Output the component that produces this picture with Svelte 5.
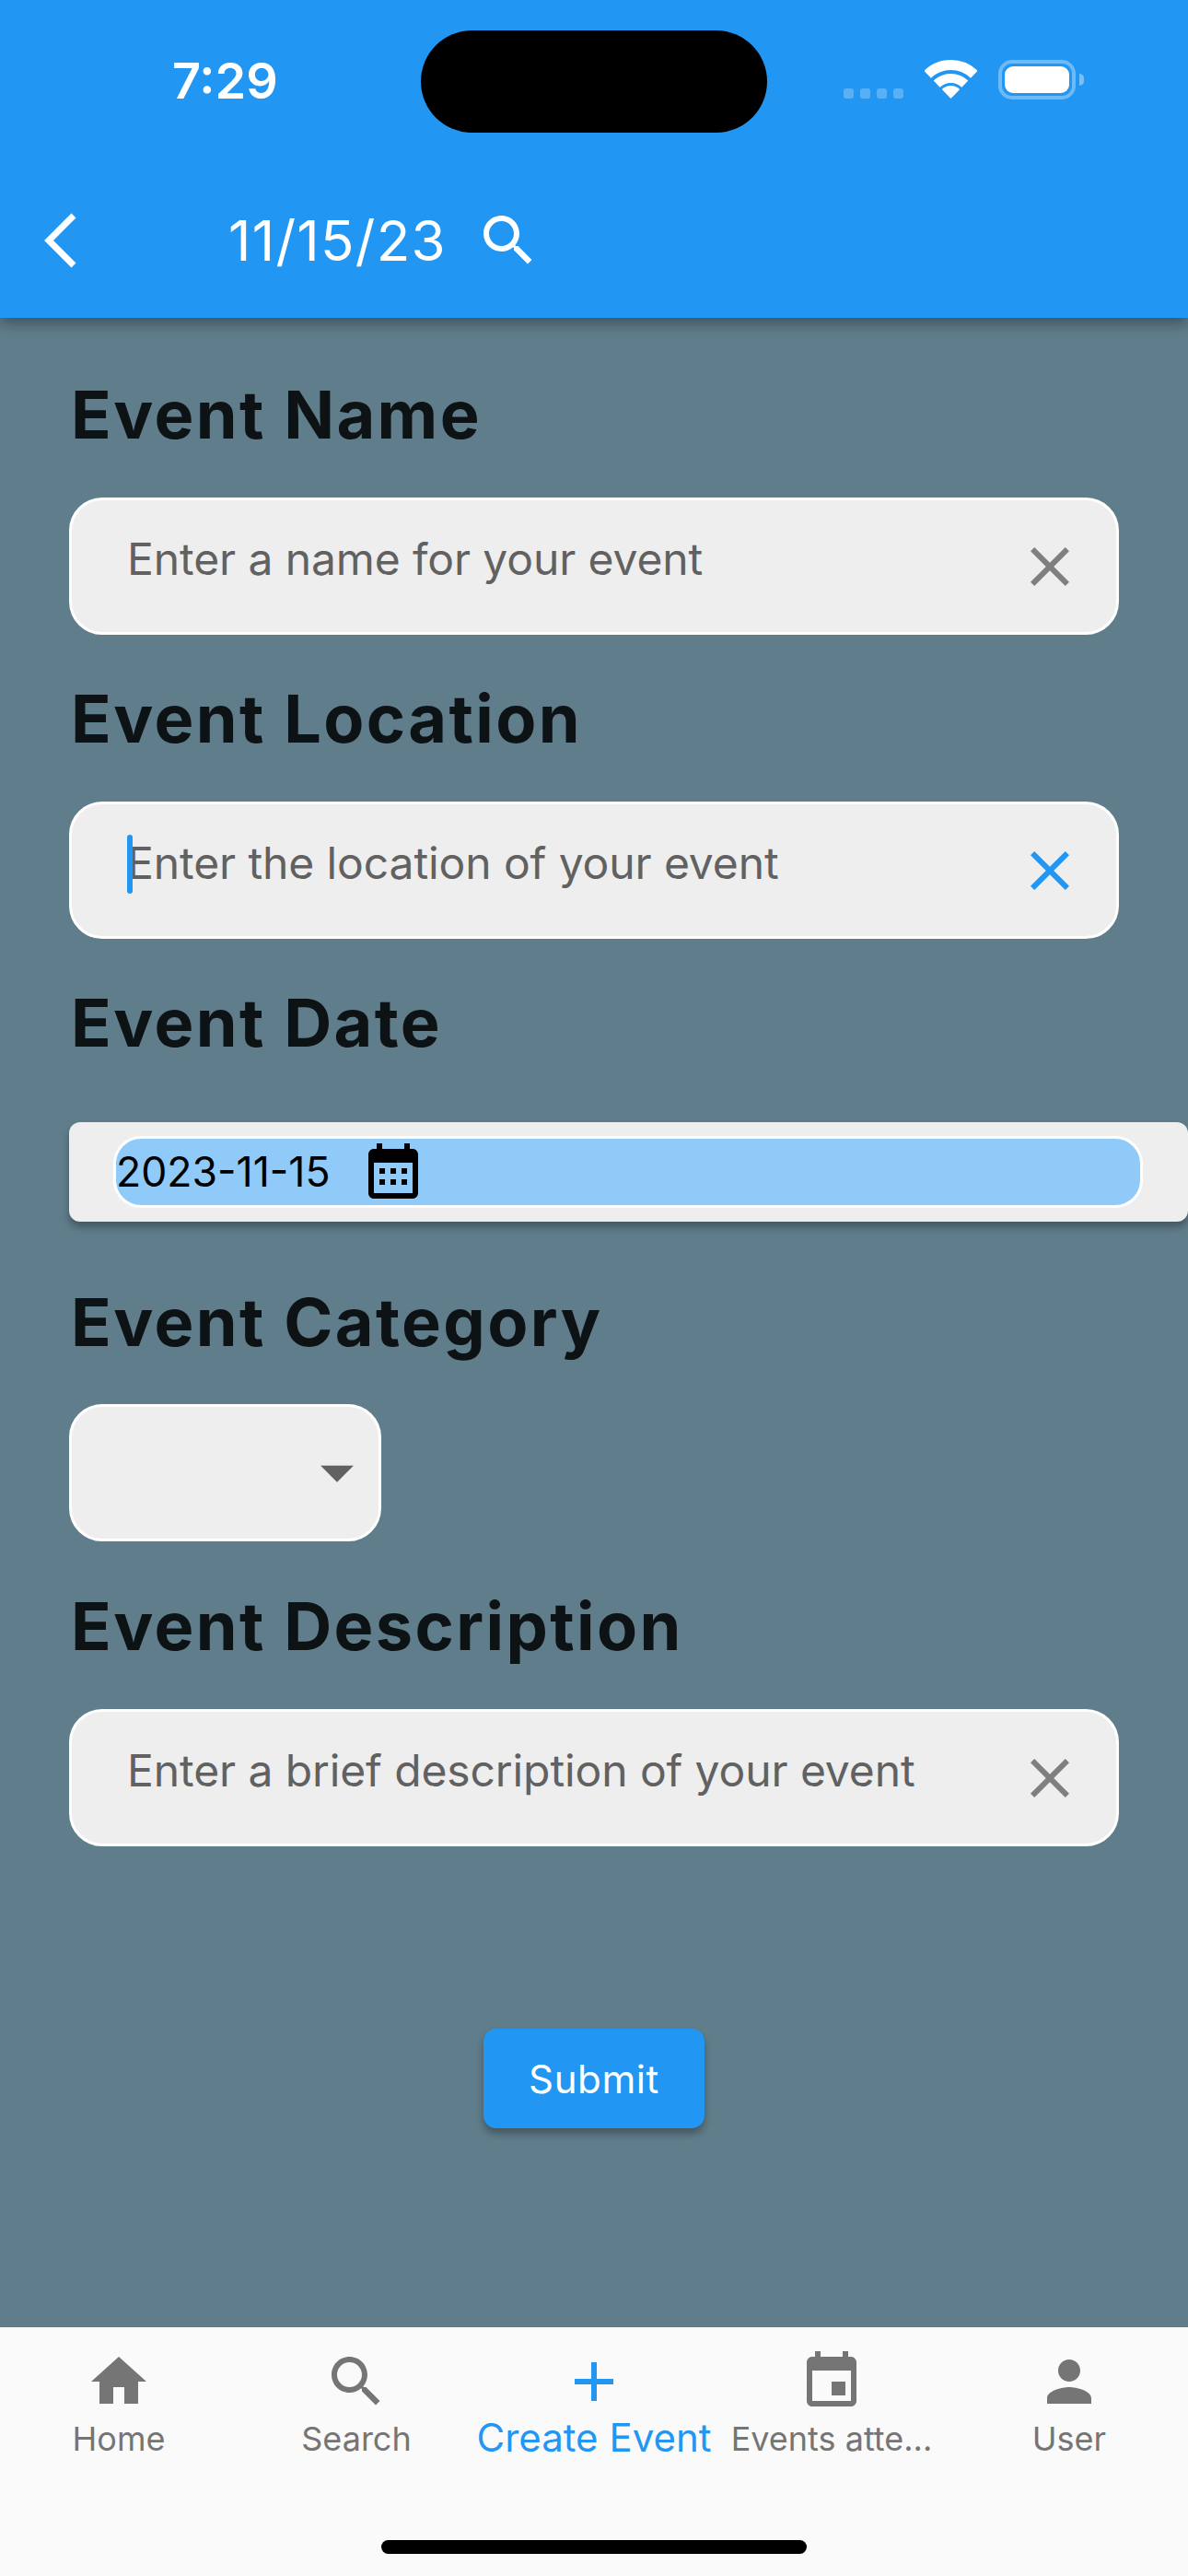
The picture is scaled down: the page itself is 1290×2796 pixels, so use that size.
<script>
  const signalDots = [0, 1, 2, 3];
  const fields = {
    name: 'Enter a name for your event',
    location: 'Enter the location of your event',
    description: 'Enter a brief description of your event',
  };
  const closePath = 'M19 6.41 17.59 5 12 10.59 6.41 5 5 6.41 10.59 12 5 17.59 6.41 19 12 13.41 17.59 19 19 17.59 13.41 12z';
  const tabs = [
    { label: 'Home', d: 'M10 20v-6h4v6h5v-8h3L12 3 2 12h3v8z' },
    { label: 'Search', d: 'M15.5 14h-.79l-.28-.27C15.41 12.59 16 11.11 16 9.5 16 5.91 13.09 3 9.5 3S3 5.91 3 9.5 5.91 16 9.5 16c1.61 0 3.09-.59 4.23-1.57l.27.28v.79l5 4.99L20.49 19l-4.99-5zm-6 0C7.01 14 5 11.99 5 9.5S7.01 5 9.5 5 14 7.01 14 9.5 11.99 14 9.5 14z' },
    { label: 'Create Event', d: 'M19 13h-6v6h-2v-6H5v-2h6V5h2v6h6v2z', active: true },
    { label: 'Events atte...', d: 'M17 12h-5v5h5v-5zM16 1v2H8V1H6v2H5c-1.11 0-1.99.9-1.99 2L3 19c0 1.1.89 2 2 2h14c1.1 0 2-.9 2-2V5c0-1.1-.9-2-2-2h-1V1h-2zm3 18H5V8h14v11z' },
    { label: 'User', d: 'M12 12c2.21 0 4-1.79 4-4s-1.79-4-4-4-4 1.79-4 4 1.79 4 4 4zm0 2c-2.67 0-8 1.34-8 4v2h16v-2c0-2.66-5.33-4-8-4z' },
  ];
</script>

<div class="screen">
  <header class="appbar">
    <div class="status">
      <span class="time">7:29</span>
      <div class="island"></div>
      <div class="status-icons">
        <div class="signal">
          {#each signalDots as dot (dot)}
            <span class="dot"></span>
          {/each}
        </div>
        <svg class="wifi" width="57" height="42" viewBox="0 0 57 42" fill="none">
          <path d="M3.1 15.8A36.5 36.5 0 0 1 53.9 15.8" stroke="#fff" stroke-width="11" />
          <path d="M13.2 26.2A22 22 0 0 1 43.8 26.2" stroke="#fff" stroke-width="10" />
          <path d="M28.5 42L18.8 31.9A14 14 0 0 1 38.2 31.9Z" fill="#fff" />
        </svg>
        <div class="battery"><span class="charge"></span></div>
        <span class="nub"></span>
      </div>
    </div>
    <div class="toolbar">
      <svg class="back" width="40" height="64" viewBox="0 0 40 64" fill="none">
        <path d="M33 5L6 32L33 59" stroke="#fff" stroke-width="7" />
      </svg>
      <span class="title">11/15/23</span>
      <svg class="search" width="72" height="72" viewBox="0 0 24 24" fill="#fff"><path d={tabs[1].d} /></svg>
    </div>
  </header>

  <main class="content">
    <h2 class="label first">Event Name</h2>
    <div class="field">
      <span class="hint">{fields.name}</span>
      <svg width="72" height="72" viewBox="0 0 24 24" fill="#7f7f7f"><path d={closePath} /></svg>
    </div>

    <h2 class="label">Event Location</h2>
    <div class="field">
      <span class="caret"></span>
      <span class="hint">{fields.location}</span>
      <svg width="72" height="72" viewBox="0 0 24 24" fill="#2196f3"><path d={closePath} /></svg>
    </div>

    <h2 class="label to-date">Event Date</h2>
    <div class="date-card">
      <div class="date-pill">
        <span class="date-text">2023-11-15</span>
        <svg width="72" height="72" viewBox="0 0 24 24" fill="#000">
          <path d="M19 3h-1V1h-2v2H8V1H6v2H5c-1.11 0-2 .9-2 2v14c0 1.1.89 2 2 2h14c1.1 0 2-.9 2-2V5c0-1.1-.9-2-2-2zm0 16H5V8h14zM7 10h2v2H7zm4 0h2v2h-2zm4 0h2v2h-2zM7 14h2v2H7zm4 0h2v2h-2zm4 0h2v2h-2z" />
        </svg>
      </div>
    </div>

    <h2 class="label after-date">Event Category</h2>
    <div class="field dropdown">
      <svg width="86" height="86" viewBox="0 0 24 24" fill="#616161"><path d="M7 10l5 5 5-5z" /></svg>
    </div>

    <h2 class="label">Event Description</h2>
    <div class="field">
      <span class="hint">{fields.description}</span>
      <svg width="72" height="72" viewBox="0 0 24 24" fill="#7f7f7f"><path d={closePath} /></svg>
    </div>

    <button class="submit">Submit</button>
  </main>

  <footer class="bottom">
    <nav class="tabs">
      {#each tabs as tab (tab.label)}
        <div class="tab" class:active={tab.active}>
          <svg width="72" height="72" viewBox="0 0 24 24" fill="currentColor"><path d={tab.d} /></svg>
          <span>{tab.label}</span>
        </div>
      {/each}
    </nav>
    <div class="home-bar"></div>
  </footer>
</div>

<style>
  :global(body) {
    margin: 0;
  }

  .screen {
    width: 1290px;
    height: 2796px;
    display: flex;
    flex-direction: column;
    background: #607d8b;
    font-family: Inter, "Liberation Sans", sans-serif;
    overflow: hidden;
  }

  .appbar {
    height: 345px;
    flex: none;
    background: #2196f3;
    box-shadow: 0 6px 14px rgba(0, 0, 0, 0.35);
    position: relative;
    z-index: 1;
  }

  .status {
    height: 177px;
    display: flex;
    color: #fff;
  }

  .time {
    width: 270px;
    margin-left: 187px;
    padding-top: 53px;
    font-size: 54px;
    line-height: 70px;
    font-weight: 600;
    white-space: nowrap;
  }

  .island {
    width: 376px;
    height: 111px;
    margin-top: 33px;
    border-radius: 56px;
    background: #000;
  }

  .status-icons {
    display: flex;
    align-items: flex-end;
    height: 43px;
    margin-top: 65px;
    margin-left: 83px;
  }

  .signal {
    display: flex;
    gap: 7px;
    margin-bottom: 1px;
    margin-right: 23px;
  }

  .dot {
    width: 11px;
    height: 11px;
    border-radius: 3px;
    background: rgba(255, 255, 255, 0.25);
  }

  .wifi {
    margin-bottom: 1px;
    margin-right: 23px;
  }

  .battery {
    width: 84px;
    height: 43px;
    box-sizing: border-box;
    border: 4px solid rgba(255, 255, 255, 0.35);
    border-radius: 15px;
    padding: 3px;
    display: flex;
  }

  .charge {
    flex: 1;
    background: #fff;
    border-radius: 9px;
  }

  .nub {
    width: 5px;
    height: 13px;
    margin: 0 0 15px 4px;
    background: rgba(255, 255, 255, 0.4);
    border-radius: 0 6px 6px 0;
  }

  .toolbar {
    height: 168px;
    display: flex;
    align-items: center;
    padding-left: 47px;
  }

  .back {
    flex: none;
  }

  .title {
    margin-left: 161px;
    font-size: 60px;
    letter-spacing: 1.3px;
    color: #fff;
    white-space: nowrap;
  }

  .search {
    margin-left: 31px;
  }

  .content {
    flex: 1;
    display: flex;
    flex-direction: column;
    align-items: flex-start;
    padding-left: 75px;
  }

  .label {
    margin: 47px 0 47px 2px;
    font-size: 72px;
    line-height: 87px;
    font-weight: 700;
    letter-spacing: 2.4px;
    color: #0d1215;
    white-space: nowrap;
  }

  .label.first {
    margin-top: 61px;
  }

  .label.to-date {
    margin-bottom: 65px;
  }

  .label.after-date {
    margin: 65px 0 46px 2px;
  }

  .field {
    width: 1140px;
    height: 149px;
    box-sizing: border-box;
    display: flex;
    align-items: center;
    justify-content: space-between;
    padding: 0 36px 0 60px;
    background: #eee;
    border: 3px solid #fff;
    border-radius: 36px;
    position: relative;
  }

  .hint {
    margin-bottom: 16px;
    font-size: 48px;
    line-height: 60px;
    letter-spacing: -0.1px;
    color: #616161;
    white-space: nowrap;
  }

  .caret {
    position: absolute;
    left: 60px;
    top: 33px;
    width: 6px;
    height: 64px;
    border-radius: 3px;
    background: #2196f3;
  }

  .dropdown {
    width: 339px;
    padding: 0;
    margin-bottom: 1px;
    justify-content: flex-end;
  }

  .dropdown svg {
    margin: 0 2px 2px 0;
  }

  .date-card {
    align-self: stretch;
    height: 108px;
    box-sizing: border-box;
    padding: 15px 49px 0 48px;
    background: #eee;
    border-radius: 12px;
    box-shadow: 0 6px 9px rgba(0, 0, 0, 0.3);
  }

  .date-pill {
    height: 78px;
    box-sizing: border-box;
    display: flex;
    align-items: center;
    background: #90caf9;
    border: 3px solid #fff;
    border-radius: 30px;
  }

  .date-text {
    font-size: 44.6px;
    color: #000;
    white-space: nowrap;
  }

  .date-pill svg {
    margin: 3px 0 0 32px;
  }

  .submit {
    align-self: center;
    margin: 198px 0 0 -75px;
    width: 240px;
    height: 108px;
    border: none;
    border-radius: 14px;
    background: #2196f3;
    color: #fff;
    font-family: inherit;
    font-size: 42px;
    font-weight: 400;
    letter-spacing: 0.6px;
    box-shadow: 0 6px 9px rgba(0, 0, 0, 0.3);
  }

  .bottom {
    height: 270px;
    flex: none;
    display: flex;
    flex-direction: column;
    align-items: center;
    background: #fafafa;
  }

  .tabs {
    align-self: stretch;
    display: grid;
    grid-template-columns: repeat(5, 258px);
    padding-top: 23px;
  }

  .tab {
    display: flex;
    flex-direction: column;
    align-items: center;
    color: #757575;
    font-size: 36px;
    line-height: 50px;
    white-space: nowrap;
  }

  .tab span {
    margin-top: 1px;
  }

  .tab.active {
    color: #2196f3;
    font-size: 42px;
  }

  .tab.active span {
    margin-top: 0;
  }

  .home-bar {
    width: 462px;
    height: 15px;
    margin-top: auto;
    margin-bottom: 24px;
    border-radius: 8px;
    background: #000;
  }
</style>
